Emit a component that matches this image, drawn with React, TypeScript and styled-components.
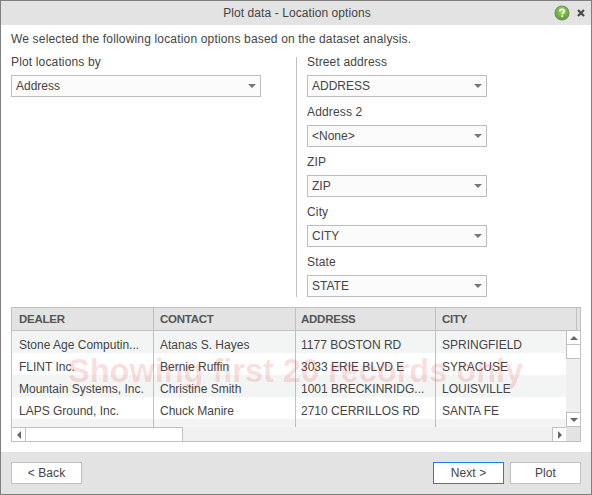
import styled, { createGlobalStyle } from "styled-components";

const GlobalStyle = createGlobalStyle`
  html, body {
    margin: 0;
    padding: 0;
    background: #fff;
  }
  * {
    box-sizing: border-box;
  }
`;

const Dialog = styled.div`
  width: 592px;
  height: 495px;
  border: 1px solid #7f7f7f;
  display: flex;
  flex-direction: column;
  font-family: "Liberation Sans", Arial, sans-serif;
  font-size: 12px;
  color: #444;
  background: #fff;
`;

const TitleBar = styled.div`
  height: 24px;
  flex: none;
  background: #e3e3e3;
  position: relative;
  display: flex;
  align-items: center;
  justify-content: center;
  padding-left: 2px;
  color: #444;
  letter-spacing: 0.08px;
`;

const TitleIcons = styled.div`
  position: absolute;
  right: 6px;
  top: 4px;
  display: flex;
  align-items: center;
  gap: 7px;
`;

const Content = styled.div`
  flex: 1;
  padding: 7px 10px 0;
  position: relative;
`;

const Intro = styled.div`
  height: 14px;
  line-height: 14px;
  letter-spacing: 0.167px;
`;

const Options = styled.div`
  display: flex;
  margin-top: 11px;
  height: 240px;
`;

const LeftColumn = styled.div`
  width: 285px;
  flex: none;
`;

const RightColumn = styled.div`
  border-left: 1px solid #c0c0c0;
  padding-left: 10px;
`;

const Field = styled.div`
  height: 50px;
  display: flex;
  flex-direction: column;
`;

const Label = styled.div`
  height: 14px;
  line-height: 14px;
  margin-top: -2px;
  margin-bottom: 6px;
  letter-spacing: 0.15px;
`;

const Select = styled.div<{ $width: number }>`
  width: ${(p) => p.$width}px;
  height: 22px;
  flex: none;
  border: 1px solid #bdbdbd;
  background: #fbfbfb;
  display: flex;
  align-items: center;
  justify-content: space-between;
  padding: 0 4px 0 4px;
  color: #444;
`;

const Caret = styled.span`
  width: 0;
  height: 0;
  border-left: 4px solid transparent;
  border-right: 4px solid transparent;
  border-top: 4px solid #777;
`;

const TableBox = styled.div`
  margin-top: 10px;
  width: 570px;
  height: 135px;
  border: 1px solid #c0c0c0;
  display: flex;
  flex-direction: column;
  overflow: hidden;
`;

const Header = styled.div`
  display: grid;
  grid-template-columns: 142px 142px 140px 141px 1fr;
  height: 23px;
  flex: none;
  background: #e3e3e3;
  border-bottom: 1px solid #c0c0c0;
`;

const HeaderCell = styled.div`
  border-right: 1px solid #c0c0c0;
  padding-left: 6px;
  line-height: 22px;
  font-size: 11.5px;
  letter-spacing: -0.25px;
  font-weight: bold;
  color: #555;
  &:first-child {
    padding-left: 7px;
  }
  &:nth-child(3) {
    padding-left: 5px;
  }
  &:last-child {
    border-right: none;
  }
`;

const Middle = styled.div`
  display: flex;
  height: 96px;
  flex: none;
`;

const Rows = styled.div`
  width: 554px;
  flex: none;
  overflow: hidden;
`;

const Row = styled.div<{ $striped: boolean }>`
  display: grid;
  grid-template-columns: 142px 142px 140px 130px;
  height: 22px;
  background: ${(p) => (p.$striped ? "#f3f5f4" : "#fff")};
`;

const Cell = styled.div`
  border-right: 1px solid #c0c0c0;
  padding: 3px 0 0 6px;
  line-height: 22px;
  white-space: nowrap;
  overflow: hidden;
  color: #444;
  &:first-child {
    padding-left: 7px;
  }
  &:nth-child(3) {
    padding-left: 5px;
  }
  &:last-child {
    border-right: none;
  }
`;

const VScroll = styled.div`
  width: 14px;
  flex: none;
  background: #efefef;
  display: flex;
  flex-direction: column;
`;

const ScrollButton = styled.div`
  flex: none;
  width: 14px;
  height: 14px;
  background: #fff;
  border: 1px solid #c0c0c0;
  border-width: 0 0 1px 1px;
  display: flex;
  align-items: center;
  justify-content: center;
`;

const DownButton = styled(ScrollButton)`
  height: 15px;
  border-top-width: 1px;
`;

const VSpacer = styled.div`
  flex: 1;
`;

const HScroll = styled.div`
  flex: 1;
  display: flex;
  background: #f1f1f1;
`;

const HThumb = styled.div`
  width: 157px;
  flex: none;
  background: #fff;
  border: 1px solid #c0c0c0;
  border-width: 1px 1px 0 0;
`;

const HButton = styled.div`
  width: 14px;
  flex: none;
  background: #fff;
  border: 1px solid #c0c0c0;
  border-width: 1px 1px 0 0;
  display: flex;
  align-items: center;
  justify-content: center;
`;

const HEndButton = styled(HButton)`
  margin-left: auto;
  border-width: 1px 0 0 1px;
`;

const Corner = styled.div`
  width: 14px;
  flex: none;
  background: #e3e3e3;
`;

const Arrow = styled.span<{ $dir: "up" | "down" | "left" | "right" }>`
  width: 0;
  height: 0;
  border-style: solid;
  border-color: transparent;
  ${(p) =>
    p.$dir === "up"
      ? "border-width: 0 4px 4px; border-bottom-color: #666;"
      : p.$dir === "down"
      ? "border-width: 4px 4px 0; border-top-color: #666;"
      : p.$dir === "left"
      ? "border-width: 4px 4px 4px 0; border-right-color: #666;"
      : "border-width: 4px 0 4px 4px; border-left-color: #666;"}
`;

const Watermark = styled.div`
  position: absolute;
  left: 67px;
  top: 328px;
  font-size: 32.5px;
  font-weight: bold;
  color: rgba(225, 50, 50, 0.16);
  white-space: nowrap;
  pointer-events: none;
`;

const Footer = styled.div`
  height: 42px;
  flex: none;
  background: #e3e3e3;
  display: flex;
  align-items: flex-start;
  padding: 10px 10px 0;
`;

const Button = styled.div<{ $focused?: boolean }>`
  width: 71px;
  height: 22px;
  border: 1px solid ${(p) => (p.$focused ? "#1a7fe8" : "#c0c0c0")};
  background: #fff;
  display: flex;
  align-items: center;
  justify-content: center;
  color: #444;
  letter-spacing: 0.1px;
`;

const FooterGap = styled.div`
  flex: 1;
`;

const PlotButton = styled(Button)`
  margin-left: 6px;
`;

const HelpIcon = () => (
  <svg width="16" height="16" viewBox="0 0 16 16">
    <defs>
      <radialGradient id="help" cx="50%" cy="35%" r="65%">
        <stop offset="0%" stopColor="#a6dc6a" />
        <stop offset="100%" stopColor="#4f9d22" />
      </radialGradient>
    </defs>
    <circle cx="8" cy="8" r="7" fill="url(#help)" stroke="#7b8b74" strokeWidth="1.2" />
    <path
      d="M5.8 6.2c0-1.3 1-2 2.3-2s2.2.8 2.2 1.9c0 1.7-2 1.6-2 3.2"
      fill="none"
      stroke="#fff"
      strokeWidth="1.6"
    />
    <rect x="7.4" y="10.3" width="1.7" height="1.7" fill="#fff" />
  </svg>
);

const CloseIcon = () => (
  <svg width="8" height="8" viewBox="0 0 8 8">
    <path d="M1 1l6 6M7 1l-6 6" stroke="#4a4a4a" strokeWidth="2.2" />
  </svg>
);

const rightFields = [
  { label: "Street address", value: "ADDRESS" },
  { label: "Address 2", value: "<None>" },
  { label: "ZIP", value: "ZIP" },
  { label: "City", value: "CITY" },
  { label: "State", value: "STATE" },
];

const columns = ["DEALER", "CONTACT", "ADDRESS", "CITY", ""];

const rows = [
  ["Stone Age Computin...", "Atanas S. Hayes", "1177 BOSTON RD", "SPRINGFIELD"],
  ["FLINT Inc.", "Bernie Ruffin", "3033 ERIE BLVD E", "SYRACUSE"],
  ["Mountain Systems, Inc.", "Christine Smith", "1001 BRECKINRIDG...", "LOUISVILLE"],
  ["LAPS Ground, Inc.", "Chuck Manire", "2710 CERRILLOS RD", "SANTA FE"],
  ["", "", "", ""],
];

export default function App() {
  return (
    <>
      <GlobalStyle />
      <Dialog>
        <TitleBar>
          Plot data - Location options
          <TitleIcons>
            <HelpIcon />
            <CloseIcon />
          </TitleIcons>
        </TitleBar>
        <Content>
          <Intro>We selected the following location options based on the dataset analysis.</Intro>
          <Options>
            <LeftColumn>
              <Field>
                <Label>Plot locations by</Label>
                <Select $width={250}>
                  Address
                  <Caret />
                </Select>
              </Field>
            </LeftColumn>
            <RightColumn>
              {rightFields.map((f) => (
                <Field key={f.label}>
                  <Label>{f.label}</Label>
                  <Select $width={180}>
                    {f.value}
                    <Caret />
                  </Select>
                </Field>
              ))}
            </RightColumn>
          </Options>
          <TableBox>
            <Header>
              {columns.map((c, i) => (
                <HeaderCell key={i}>{c}</HeaderCell>
              ))}
            </Header>
            <Middle>
              <Rows>
                {rows.map((r, i) => (
                  <Row key={i} $striped={i % 2 === 0}>
                    {r.map((v, j) => (
                      <Cell key={j}>{v}</Cell>
                    ))}
                  </Row>
                ))}
              </Rows>
              <VScroll>
                <ScrollButton>
                  <Arrow $dir="up" />
                </ScrollButton>
                <ScrollButton />
                <VSpacer />
                <DownButton>
                  <Arrow $dir="down" />
                </DownButton>
              </VScroll>
            </Middle>
            <HScroll>
              <HButton>
                <Arrow $dir="left" />
              </HButton>
              <HThumb />
              <HEndButton>
                <Arrow $dir="right" />
              </HEndButton>
              <Corner />
            </HScroll>
          </TableBox>
          <Watermark>Showing first 20 records only</Watermark>
        </Content>
        <Footer>
          <Button>&lt; Back</Button>
          <FooterGap />
          <Button $focused>Next &gt;</Button>
          <PlotButton>Plot</PlotButton>
        </Footer>
      </Dialog>
    </>
  );
}
